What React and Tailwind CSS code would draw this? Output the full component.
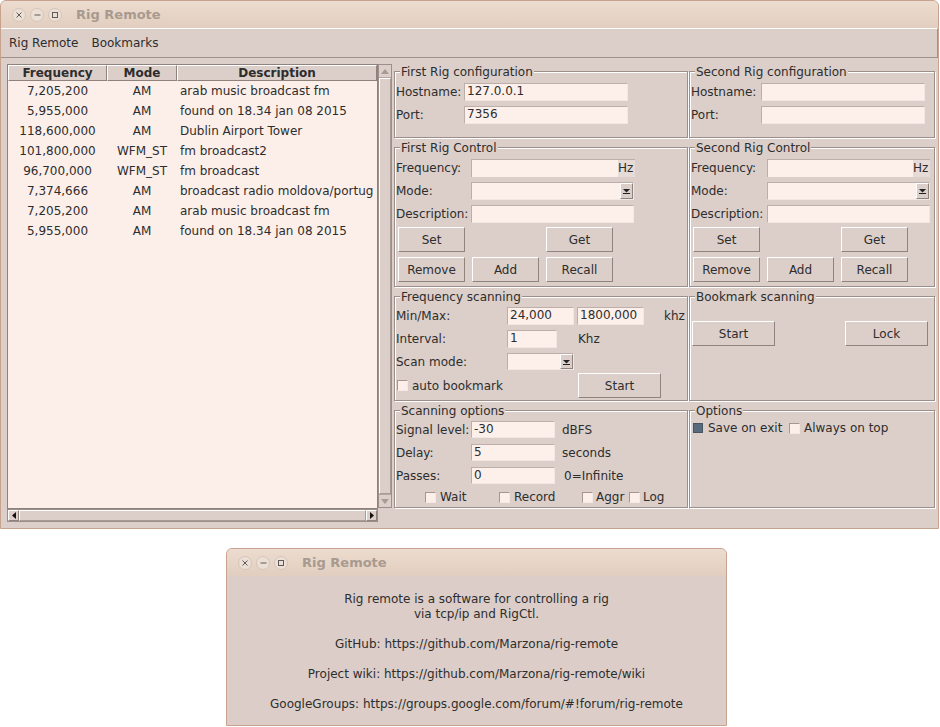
import React from 'react';

const ROWS = [
  ['7,205,200', 'AM', 'arab music broadcast fm'],
  ['5,955,000', 'AM', 'found on 18.34 jan 08 2015'],
  ['118,600,000', 'AM', 'Dublin Airport Tower'],
  ['101,800,000', 'WFM_ST', 'fm broadcast2'],
  ['96,700,000', 'WFM_ST', 'fm broadcast'],
  ['7,374,666', 'AM', 'broadcast radio moldova/portug'],
  ['7,205,200', 'AM', 'arab music broadcast fm'],
  ['5,955,000', 'AM', 'found on 18.34 jan 08 2015'],
];

const ABOUT = [
  'Rig remote is a software for controlling a rig',
  'via tcp/ip and RigCtl.',
  '',
  'GitHub: https://github.com/Marzona/rig-remote',
  '',
  'Project wiki: https://github.com/Marzona/rig-remote/wiki',
  '',
  'GoogleGroups: https://groups.google.com/forum/#!forum/rig-remote',
];

function TitleBar() {
  return (
    <div className="h-[27px] flex items-center pl-[11px] bg-gradient-to-b from-[#ecdccf] to-[#e2cebf] rounded-t-[5px]">
      <div className="flex gap-[4px]">
        <span className="w-[14px] h-[14px] rounded-full bg-[#ebdfd6] border border-[#d6c5b9] flex items-center justify-center">
          <svg width="6" height="6" viewBox="0 0 6 6"><path d="M0.5 0.5L5.5 5.5M5.5 0.5L0.5 5.5" stroke="#5f5a57" strokeWidth="1" /></svg>
        </span>
        <span className="w-[14px] h-[14px] rounded-full bg-[#ebdfd6] border border-[#d6c5b9] flex items-center justify-center">
          <svg width="7" height="6" viewBox="0 0 7 6"><path d="M0.5 3H6.5" stroke="#5f5a57" strokeWidth="1" /></svg>
        </span>
        <span className="w-[14px] h-[14px] rounded-full bg-[#ebdfd6] border border-[#d6c5b9] flex items-center justify-center">
          <svg width="6" height="6" viewBox="0 0 6 6"><rect x="0.5" y="0.5" width="5" height="5" fill="none" stroke="#5f5a57" strokeWidth="1" /></svg>
        </span>
      </div>
      <span className="ml-[14px] text-[13px] font-bold text-[#a99a90]">Rig Remote</span>
    </div>
  );
}

function Group({ title, children }) {
  return (
    <div className="pt-[7px] pr-px pb-[2px]">
      <div className="h-full border border-[#9c8f8a] shadow-[inset_1px_1px_0_#fff,1px_1px_0_#fff] pl-px">
        <div className="-mt-[8px] ml-[4px] w-fit bg-[#dccfca] px-px h-[15px] leading-[16px]">{title}</div>
        {children}
      </div>
    </div>
  );
}

function Entry({ w, value, h = 'h-[18px]' }) {
  return (
    <div className={`${h} ${w} shrink-0 bg-[#fdf0eb] border border-t-[#bcafaa] border-l-[#bcafaa] border-r-[#f1e7e3] border-b-[#f1e7e3] pl-[2px] leading-[15px] whitespace-nowrap overflow-hidden`}>
      {value}
    </div>
  );
}

function Arrow() {
  return (
    <div className="w-[13px] h-full shrink-0 bg-[#dccfca] border border-t-white border-l-white border-r-[#8f837e] border-b-[#8f837e] flex items-center justify-center">
      <svg width="7" height="7" viewBox="0 0 7 7">
        <path d="M0 2H7L3.5 5.5Z" fill="#222" />
        <path d="M0 6.5H7" stroke="#222" strokeWidth="1" />
      </svg>
    </div>
  );
}

function Combo({ w, h = 'h-[18px]' }) {
  return (
    <div className={`${h} ${w} shrink-0 flex bg-[#fdf0eb] border border-t-[#bcafaa] border-l-[#bcafaa] border-r-[#f1e7e3] border-b-[#f1e7e3]`}>
      <div className="flex-1" />
      <Arrow />
    </div>
  );
}

function FreqEntry({ w }) {
  return (
    <div className="h-[18px] flex shrink-0 border-t border-l border-[#bcafaa]">
      <div className={`${w} bg-[#fdf0eb]`} />
      <span className="w-[17px] bg-[#e6dbd6] leading-[17px]">Hz</span>
    </div>
  );
}

function Btn({ w, children }) {
  return (
    <button className={`h-[25px] ${w} flex items-center justify-center bg-[#dccfca] border border-t-white border-l-white border-r-[#8f837e] border-b-[#8f837e] text-[#2d2d2d]`}>
      {children}
    </button>
  );
}

function Check({ on }) {
  return on ? (
    <span className="w-[10px] h-[10px] shrink-0 bg-[#5a6a7d] border border-[#48545f]" />
  ) : (
    <span className="w-[11px] h-[11px] shrink-0 bg-[#fcefea] border border-t-[#a5978f] border-l-[#a5978f] border-r-[#f3e9e5] border-b-[#f3e9e5]" />
  );
}

function Row({ label, lw, children, h = 'h-[23px]' }) {
  return (
    <div className={`${h} flex items-center`}>
      <span className={`${lw} shrink-0 whitespace-nowrap`}>{label}</span>
      {children}
    </div>
  );
}

function RigControl({ lw, ew }) {
  return (
    <div className="mt-px">
      <Row label="Frequency:" lw={lw}><FreqEntry w={ew} /></Row>
      <Row label="Mode:" lw={lw}><Combo w="w-[163px]" /></Row>
      <Row label="Description:" lw={lw}><Entry w="w-[163px]" /></Row>
      <div className="mt-[2px] ml-[2px] grid grid-cols-[67px_67px_67px] gap-x-[7px] gap-y-[5px]">
        <Btn w="w-[67px]">Set</Btn>
        <div />
        <Btn w="w-[67px]">Get</Btn>
        <Btn w="w-[67px]">Remove</Btn>
        <Btn w="w-[67px]">Add</Btn>
        <Btn w="w-[67px]">Recall</Btn>
      </div>
    </div>
  );
}

function BookmarkTable() {
  return (
    <div className="flex flex-col">
      <div className="flex items-start">
        <div className="w-[371px] h-[445px] bg-[#fcefea] border border-[#8f827d] overflow-hidden">
          <div className="flex h-[16px] font-bold">
            <div className="w-[99px] text-center leading-[14px] border border-t-white border-l-white border-r-[#8f827d] border-b-[#8f827d] bg-[#dccfca]">Frequency</div>
            <div className="w-[70px] text-center leading-[14px] border border-t-white border-l-white border-r-[#8f827d] border-b-[#8f827d] bg-[#dccfca]">Mode</div>
            <div className="flex-1 text-center leading-[14px] border border-t-white border-l-white border-r-[#8f827d] border-b-[#8f827d] bg-[#dccfca]">Description</div>
          </div>
          {ROWS.map(([f, m, d], i) => (
            <div key={i} className="flex h-[20px] leading-[20px] whitespace-nowrap">
              <div className="w-[99px] text-center">{f}</div>
              <div className="w-[70px] text-center">{m}</div>
              <div className="flex-1 pl-[3px] overflow-hidden">{d}</div>
            </div>
          ))}
        </div>
        <div className="w-[14px] h-[444px] flex flex-col border border-[#9c8f8a] bg-[#dccfca]">
          <div className="h-[13px] flex items-center justify-center border-b border-[#b3a6a1]">
            <svg width="8" height="5" viewBox="0 0 8 5"><path d="M0 5L4 0L8 5Z" fill="#a89b96" /></svg>
          </div>
          <div className="flex-1 border border-t-white border-l-white border-r-[#a89b96] border-b-[#a89b96]" />
          <div className="h-[13px] flex items-center justify-center border-t border-[#b3a6a1]">
            <svg width="8" height="5" viewBox="0 0 8 5"><path d="M0 0L4 5L8 0Z" fill="#a89b96" /></svg>
          </div>
        </div>
      </div>
      <div className="w-[371px] h-[13px] flex border border-[#9c8f8a] bg-[#dccfca]">
        <div className="w-[11px] flex items-center justify-center border border-t-white border-l-white border-r-[#8f837e] border-b-[#8f837e]">
          <svg width="4" height="7" viewBox="0 0 4 7"><path d="M4 0L0 3.5L4 7Z" fill="#111" /></svg>
        </div>
        <div className="flex-1 border border-t-white border-l-white border-r-[#a89b96] border-b-[#a89b96]" />
        <div className="w-[11px] flex items-center justify-center border border-t-white border-l-white border-r-[#8f837e] border-b-[#8f837e]">
          <svg width="4" height="7" viewBox="0 0 4 7"><path d="M0 0L4 3.5L0 7Z" fill="#111" /></svg>
        </div>
      </div>
    </div>
  );
}

export default function App() {
  return (
    <div className="w-[940px] h-[727px] bg-white overflow-hidden font-['DejaVu_Sans',sans-serif] text-[12px] text-[#2d2d2d]">
      {/* Main window */}
      <div className="w-[939px] border border-[#c7a38f] rounded-t-[6px] bg-[#dccfca]">
        <TitleBar />
        <div className="h-[30px] flex items-center gap-[13px] pl-[8px] border-t border-t-white border-b border-b-[#9f928d] border-r border-r-[#a0938e]">
          <span>Rig Remote</span>
          <span>Bookmarks</span>
        </div>
        <div className="h-[470px] flex items-start pl-[6px] pt-[6px]">
          <BookmarkTable />
          <div className="ml-[2px] grid grid-cols-[295px_247px] grid-rows-[76px_149px_114px_107px]">
            <Group title="First Rig configuration">
              <div className="mt-px">
                <Row label="Hostname:" lw="w-[68px]"><Entry w="w-[164px]" value="127.0.0.1" /></Row>
                <Row label="Port:" lw="w-[68px]"><Entry w="w-[164px]" value="7356" /></Row>
              </div>
            </Group>
            <Group title="Second Rig configuration">
              <div className="mt-px">
                <Row label="Hostname:" lw="w-[70px]"><Entry w="w-[164px]" /></Row>
                <Row label="Port:" lw="w-[70px]"><Entry w="w-[164px]" /></Row>
              </div>
            </Group>
            <Group title="First Rig Control">
              <RigControl lw="w-[75px]" ew="w-[146px]" />
            </Group>
            <Group title="Second Rig Control">
              <RigControl lw="w-[76px]" ew="w-[145px]" />
            </Group>
            <Group title="Frequency scanning">
              <Row label="Min/Max:" lw="w-[111px]">
                <Entry w="w-[67px]" value="24,000" />
                <div className="ml-[3px]"><Entry w="w-[67px]" value="1800,000" /></div>
                <span className="ml-[20px]">khz</span>
              </Row>
              <Row label="Interval:" lw="w-[111px]">
                <Entry w="w-[50px]" value="1" />
                <span className="ml-[21px]">Khz</span>
              </Row>
              <Row label="Scan mode:" lw="w-[111px]">
                <Combo w="w-[67px]" h="h-[17px]" />
              </Row>
              <div className="h-[25px] flex items-center">
                <div className="w-[182px] flex items-center pl-px gap-[4px]">
                  <Check />
                  <span>auto bookmark</span>
                </div>
                <Btn w="w-[83px]">Start</Btn>
              </div>
            </Group>
            <Group title="Bookmark scanning">
              <div className="mt-[17px] ml-px w-[236px] flex justify-between">
                <Btn w="w-[83px]">Start</Btn>
                <Btn w="w-[83px]">Lock</Btn>
              </div>
            </Group>
            <Group title="Scanning options">
              <Row label="Signal level:" lw="w-[75px]">
                <Entry w="w-[84px]" value="-30" h="h-[17px]" />
                <span className="ml-[7px]">dBFS</span>
              </Row>
              <Row label="Delay:" lw="w-[75px]">
                <Entry w="w-[84px]" value="5" h="h-[17px]" />
                <span className="ml-[7px]">seconds</span>
              </Row>
              <Row label="Passes:" lw="w-[75px]">
                <Entry w="w-[84px]" value="0" h="h-[17px]" />
                <span className="ml-[9px]">0=Infinite</span>
              </Row>
              <div className="h-[20px] flex items-center pl-[29px]">
                <div className="w-[74px] flex items-center gap-[4px]"><Check /><span>Wait</span></div>
                <div className="w-[83px] flex items-center gap-[4px]"><Check /><span>Record</span></div>
                <div className="w-[47px] flex items-center gap-[3px]"><Check /><span>Aggr</span></div>
                <div className="flex items-center gap-[3px]"><Check /><span>Log</span></div>
              </div>
            </Group>
            <Group title="Options">
              <div className="h-[20px] flex items-center pl-[2px]">
                <div className="w-[96px] flex items-center gap-[5px]"><Check on /><span>Save on exit</span></div>
                <div className="flex items-center gap-[4px]"><Check /><span>Always on top</span></div>
              </div>
            </Group>
          </div>
        </div>
      </div>

      {/* About dialog */}
      <div className="mt-[19px] ml-[226px] w-[501px] border border-[#c7a38f] rounded-t-[6px] bg-[#dccdc8]">
        <TitleBar />
        <div className="h-[149px] pt-[16px] text-center leading-[15px]">
          {ABOUT.map((line, i) => (
            <div key={i} className="h-[15px] whitespace-nowrap">{line}</div>
          ))}
        </div>
      </div>
    </div>
  );
}
